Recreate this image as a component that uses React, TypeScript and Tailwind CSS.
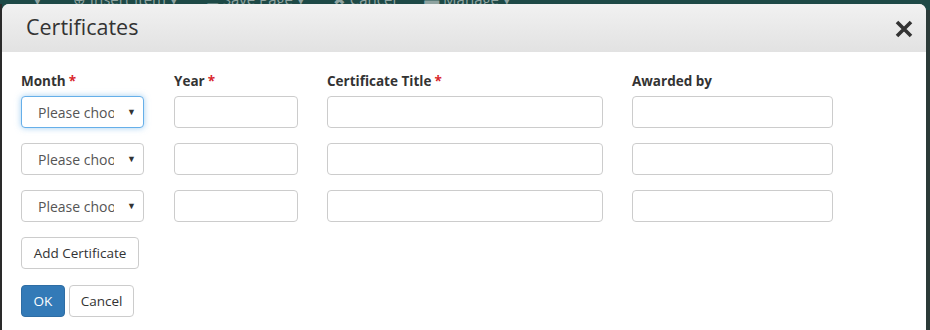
import React from 'react';

const font = { fontFamily: '"Open Sans", "Liberation Sans", sans-serif' };

const Req = () => <span className="text-[#d9262c] ml-[3px]">*</span>;

const MonthSelect: React.FC<{ focused?: boolean }> = ({ focused = false }) => (
  <div
    className={`w-[123px] h-[32px] rounded-[4px] border bg-white flex items-center justify-between pl-[16px] pr-[7px] ${
      focused ? 'border-[#66afe9] shadow-[0_0_6px_rgba(102,175,233,0.6)]' : 'border-[#cccccc]'
    }`}
  >
    <span className="text-[14px] text-[#555] whitespace-nowrap overflow-hidden w-[76px]">Please choose</span>
    <span className="text-[9px] text-[#333]">▼</span>
  </div>
);

const Input: React.FC<{ w: string }> = ({ w }) => (
  <div className={`${w} h-[32px] rounded-[4px] border border-[#cccccc] bg-white`} />
);

const Row: React.FC<{ focused?: boolean }> = ({ focused }) => (
  <div className="flex h-[32px] mb-[15px]">
    <MonthSelect focused={focused} />
    <div className="ml-[30px]"><Input w="w-[124px]" /></div>
    <div className="ml-[29px]"><Input w="w-[276px]" /></div>
    <div className="ml-[29px]"><Input w="w-[201px]" /></div>
  </div>
);

export default function App() {
  return (
    <div className="relative w-[930px] h-[330px] overflow-hidden bg-[#1d4946]" style={font}>
      <div className="absolute top-[-12px] left-[30px] flex gap-[28px] text-[15px] text-[#8fa3a0] whitespace-nowrap">
        <span>▼</span>
        <span>⊕ Insert Item ▾</span>
        <span>☰ Save Page ▾</span>
        <span>✖ Cancel</span>
        <span>▬ Manage ▾</span>
      </div>
      <div className="absolute left-0 top-[4px] w-[2px] h-[326px] bg-[#2a2a2a]" />
      <div className="relative ml-[2px] mt-[4px] w-[924px] h-[326px] bg-white rounded-t-[7px] overflow-hidden">
        <div className="h-[48px] bg-gradient-to-b from-[#f1f1f1] to-[#e2e2e2] flex items-center justify-between pl-[24px] pr-[13px]">
          <span className="text-[21.5px] text-[#333] -mt-[1px]">Certificates</span>
          <svg width="18" height="18" viewBox="0 0 18 18" className="mt-[1px]">
            <path d="M2 2 L16 16 M16 2 L2 16" stroke="#333" strokeWidth="3.6" strokeLinecap="butt" />
          </svg>
        </div>
        <div className="pl-[19px] pt-[19px]">
          <div className="flex text-[13.5px] font-bold text-[#333] h-[20px] mb-[5px]">
            <div className="w-[123px]">Month<Req /></div>
            <div className="ml-[30px] w-[124px]">Year<Req /></div>
            <div className="ml-[29px] w-[276px]">Certificate Title<Req /></div>
            <div className="ml-[29px] w-[201px]">Awarded by</div>
          </div>
          <Row focused />
          <Row />
          <Row />
          <button className="h-[32px] w-[118px] rounded-[4px] border border-[#cccccc] bg-white text-[13.5px] text-[#333]">
            Add Certificate
          </button>
          <div className="flex gap-[4px] mt-[16px]">
            <button className="h-[32px] w-[44px] rounded-[4px] border border-[#2e6da4] bg-[#337ab7] text-[13.5px] text-white">
              OK
            </button>
            <button className="h-[32px] w-[65px] rounded-[4px] border border-[#cccccc] bg-white text-[13.5px] text-[#333]">
              Cancel
            </button>
          </div>
        </div>
      </div>
      <div className="absolute right-0 top-[10px] w-[4px] h-[320px] bg-[#2b3a38]" />
    </div>
  );
}
